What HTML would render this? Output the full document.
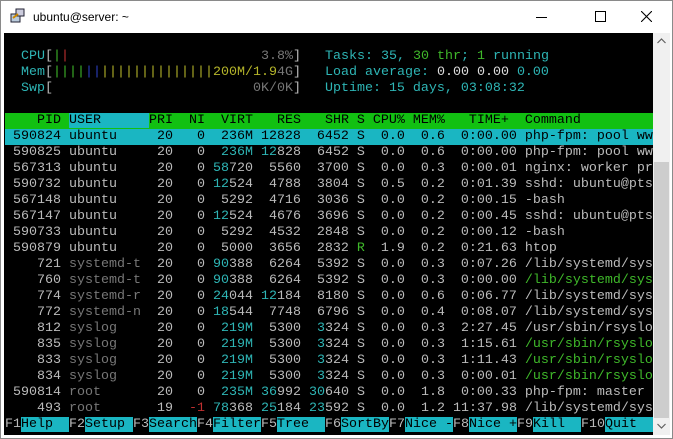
<!DOCTYPE html>
<html><head><meta charset="utf-8"><style>
*{margin:0;padding:0}
body{width:673px;height:439px;background:#fff;position:relative;overflow:hidden;font-family:"Liberation Sans",sans-serif}
#win{position:absolute;left:0;top:0;width:671px;height:437px;border:1px solid #8a8a8a;background:#fff}
#title{position:absolute;left:32px;top:9px;font-size:12px;color:#000}
#term{position:absolute;left:4px;top:33px;width:649px;height:402px;background:#000}
.r{position:absolute;left:1px;height:16px;line-height:16px;white-space:pre;font-family:"Liberation Mono",monospace;font-size:13.33px;color:#bbb}
.c{color:#2eb5b5}.g{color:#3fb82a}.y{color:#b5b52a}.b{color:#2b3fc0}.rd{color:#c03030}.d{color:#777}.w{color:#ddd}.k{color:#000}
.hd{background:#12c012;color:#000}.sel{background:#1ab6c2;color:#000}
#sb{position:absolute;left:653px;top:33px;width:17px;height:402px;background:#f0f0f0}
#thumb{position:absolute;left:1px;top:129px;width:15px;height:256px;background:#cdcdcd}
</style></head><body>
<div id="win">
<svg style="position:absolute;left:9px;top:7px" width="16" height="16" viewBox="0 0 16 16"><rect x="1" y="6" width="9" height="8" fill="#bcd" stroke="#223" stroke-width="1"/><rect x="6" y="1" width="8" height="7" fill="#ccd" stroke="#223"/><path d="M3 10l5-4" stroke="#c80" stroke-width="2"/></svg>
<div id="title">ubuntu@server: ~</div>
<div style="position:absolute;left:535px;top:16px;width:11px;height:1px;background:#000"></div>
<div style="position:absolute;left:594px;top:10px;width:9px;height:9px;border:1px solid #000"></div>
<svg style="position:absolute;left:640px;top:10px" width="11" height="11"><path d="M0 0L11 11M11 0L0 11" stroke="#000" stroke-width="1.1"/></svg>
</div>
<div id="term">
<div class="r" style="top:16px">  <span class="c">CPU</span>[<span class="g">|</span><span class="rd">|</span>                        <span class="d">3.8%</span>]   <span class="c">Tasks: </span><span class="c">35</span><span class="c">, </span><span class="g">30 thr</span><span class="c">; </span><span class="g">1</span><span class="c"> running</span></div>
<div class="r" style="top:32px">  <span class="c">Mem</span>[<span class="g">||||</span><span class="b">||</span><span class="y">||||||||||||||200M/1.9</span><span class="d">4G</span>]   <span class="c">Load average: </span><span class="w">0.00 0.00 </span><span class="c">0.00</span></div>
<div class="r" style="top:48px">  <span class="c">Swp</span>[                         <span class="d">0K/0K</span>]   <span class="c">Uptime: 15 days, 03:08:32</span></div>
<div class="r hd" style="top:80px;width:648px">    PID <span class="sel">USER      </span>PRI  NI  VIRT   RES   SHR S CPU% MEM%   TIME+  Command         </div>
<div class="r sel" style="top:96px;width:648px"> 590824 ubuntu     20   0  236M 12828  6452 S  0.0  0.6  0:00.00 php-fpm: pool ww</div>
<div class="r" style="top:112px"> 590825 ubuntu     20   0  <span class="c">236M 12</span>828  6452 S  0.0  0.6  0:00.00 php-fpm: pool ww</div>
<div class="r" style="top:128px"> 567313 ubuntu     20   0 <span class="c">58</span>720  5560  3700 S  0.0  0.3  0:00.01 nginx: worker pr</div>
<div class="r" style="top:144px"> 590732 ubuntu     20   0 <span class="c">12</span>524  4788  3804 S  0.5  0.2  0:01.39 sshd: ubuntu@pts</div>
<div class="r" style="top:160px"> 567148 ubuntu     20   0  5292  4716  3036 S  0.0  0.2  0:00.15 -bash</div>
<div class="r" style="top:176px"> 567147 ubuntu     20   0 <span class="c">12</span>524  4676  3696 S  0.0  0.2  0:00.45 sshd: ubuntu@pts</div>
<div class="r" style="top:192px"> 590733 ubuntu     20   0  5292  4532  2848 S  0.0  0.2  0:00.12 -bash</div>
<div class="r" style="top:208px"> 590879 ubuntu     20   0  5000  3656  2832 <span class="g">R</span>  1.9  0.2  0:21.63 htop</div>
<div class="r" style="top:224px">    721 <span class="d">systemd-t</span>  20   0 <span class="c">90</span>388  6264  5392 S  0.0  0.3  0:07.26 /lib/systemd/sys</div>
<div class="r" style="top:240px">    760 <span class="d">systemd-t</span>  20   0 <span class="c">90</span>388  6264  5392 S  0.0  0.3  0:00.00 <span class="g">/lib/systemd/sys</span></div>
<div class="r" style="top:256px">    774 <span class="d">systemd-r</span>  20   0 <span class="c">24</span>044 <span class="c">12</span>184  8180 S  0.0  0.6  0:06.77 /lib/systemd/sys</div>
<div class="r" style="top:272px">    772 <span class="d">systemd-n</span>  20   0 <span class="c">18</span>544  7748  6796 S  0.0  0.4  0:08.07 /lib/systemd/sys</div>
<div class="r" style="top:288px">    812 <span class="d">syslog   </span>  20   0  <span class="c">219M</span>  5300  <span class="c">3</span>324 S  0.0  0.3  2:27.45 /usr/sbin/rsyslo</div>
<div class="r" style="top:304px">    835 <span class="d">syslog   </span>  20   0  <span class="c">219M</span>  5300  <span class="c">3</span>324 S  0.0  0.3  1:15.61 <span class="g">/usr/sbin/rsyslo</span></div>
<div class="r" style="top:320px">    833 <span class="d">syslog   </span>  20   0  <span class="c">219M</span>  5300  <span class="c">3</span>324 S  0.0  0.3  1:11.43 <span class="g">/usr/sbin/rsyslo</span></div>
<div class="r" style="top:336px">    834 <span class="d">syslog   </span>  20   0  <span class="c">219M</span>  5300  <span class="c">3</span>324 S  0.0  0.3  0:00.01 <span class="g">/usr/sbin/rsyslo</span></div>
<div class="r" style="top:352px"> 590814 <span class="d">root     </span>  20   0  <span class="c">235M 36</span>992 <span class="c">30</span>640 S  0.0  1.8  0:00.33 php-fpm: master</div>
<div class="r" style="top:368px">    493 <span class="d">root     </span>  19  <span class="rd">-1</span> <span class="c">78</span>368 <span class="c">25</span>184 <span class="c">23</span>592 S  0.0  1.2 11:37.98 /lib/systemd/sys</div>
<div class="r" style="top:384px;width:648px">F1<span class="sel">Help  </span>F2<span class="sel">Setup </span>F3<span class="sel">Search</span>F4<span class="sel">Filter</span>F5<span class="sel">Tree  </span>F6<span class="sel">SortBy</span>F7<span class="sel">Nice -</span>F8<span class="sel">Nice +</span>F9<span class="sel">Kill  </span>F10<span class="sel">Quit  </span></div>
</div>
<div id="sb"><div id="thumb"></div>
<svg style="position:absolute;left:4px;top:5px" width="9" height="6"><path d="M0.5 5L4.5 1L8.5 5" stroke="#606060" fill="none" stroke-width="1.2"/></svg>
<svg style="position:absolute;left:4px;top:390px" width="9" height="6"><path d="M0.5 1L4.5 5L8.5 1" stroke="#606060" fill="none" stroke-width="1.2"/></svg>
</div>
</body></html>
